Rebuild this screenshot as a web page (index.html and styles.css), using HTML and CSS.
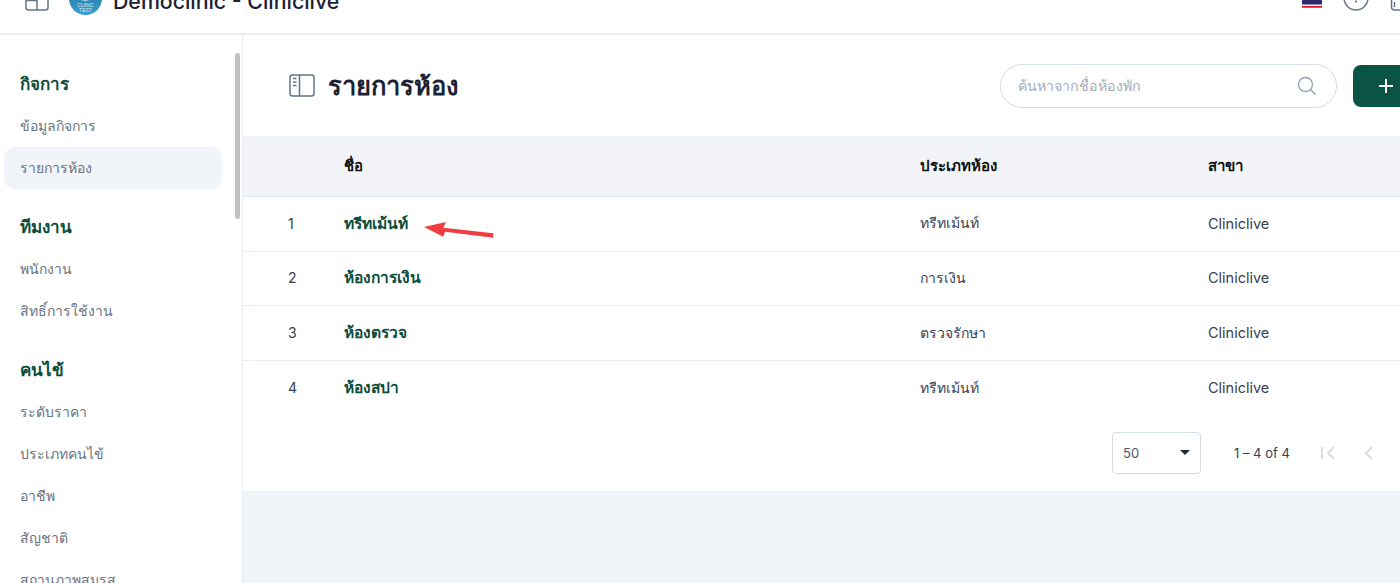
FILE: index.html
```html
<!DOCTYPE html>
<html lang="th">
<head>
<meta charset="utf-8">
<title>รายการห้อง</title>
<link rel="stylesheet" href="styles.css">
</head>
<body>
<header class="topbar">
  <div class="topbar-left">
    <svg class="panel-icon" width="24" height="24" viewBox="0 0 24 24"><rect x="1" y="1" width="22" height="22" rx="2.500"/><path d="M1 13.500h11M12 1v22"/></svg>
    <svg class="logo" width="33" height="33" viewBox="0 0 33 33"><defs><linearGradient id="lg" x1="0" y1="0" x2="0" y2="1"><stop offset="0" stop-color="#1f6f9e"/><stop offset="1" stop-color="#3c9fcd"/></linearGradient></defs><circle cx="16.500" cy="16.500" r="16.500" fill="url(#lg)"/><path d="M10 17q6 3 13 0" fill="none" stroke="#bfe0ee"/><text class="logo-text" x="16.500" y="24.500">CLINIC</text><text class="logo-text" x="16.500" y="30">TEST</text></svg>
    <span class="brand">Democlinic - Cliniclive</span>
  </div>
  <div class="topbar-right">
    <svg class="flag" width="20" height="8" viewBox="0 0 20 8"><rect width="20" height="8" fill="#fff"/><rect width="20" height="4.500" fill="#2d2a6e"/><rect y="5.800" width="20" height="2" fill="#e0202c"/></svg>
    <svg class="info" width="26" height="11" viewBox="0 0 26 11"><circle cx="13" cy="-2" r="12"/><circle cx="13" cy="1.500" r="1.100" class="dot"/></svg>
    <svg class="bin" width="10" height="11" viewBox="0 0 10 11"><path d="M1.500 0v7q0 3 3 3h5.500M4.500 2v5"/></svg>
  </div>
</header>
<div class="layout">
  <aside class="sidebar">
    <section class="nav-group">
      <h3 class="nav-head">กิจการ</h3>
      <a class="nav-item">ข้อมูลกิจการ</a>
      <a class="nav-item active">รายการห้อง</a>
    </section>
    <section class="nav-group">
      <h3 class="nav-head">ทีมงาน</h3>
      <a class="nav-item">พนักงาน</a>
      <a class="nav-item">สิทธิ์การใช้งาน</a>
    </section>
    <section class="nav-group">
      <h3 class="nav-head">คนไข้</h3>
      <a class="nav-item">ระดับราคา</a>
      <a class="nav-item">ประเภทคนไข้</a>
      <a class="nav-item">อาชีพ</a>
      <a class="nav-item">สัญชาติ</a>
      <a class="nav-item">สถานภาพสมรส</a>
    </section>
    <div class="scrollbar"></div>
  </aside>
  <main class="content">
    <div class="card">
      <div class="page-head">
        <div class="page-title">
          <svg class="title-icon" width="26" height="24" viewBox="0 0 26 24"><rect x="1" y="1" width="24" height="21" rx="2.500"/><path d="M10.500 1v21M4 4.500h3.500M4 8h3.500M4 11.500h3.500"/></svg>
          <h1>รายการห้อง</h1>
        </div>
        <div class="page-actions">
          <div class="search">
            <span class="search-text">ค้นหาจากชื่อห้องพัก</span>
            <svg width="20" height="20" viewBox="0 0 20 20"><circle cx="8.500" cy="8.500" r="7"/><path d="M13.500 13.500l5 5"/></svg>
          </div>
          <button class="add-btn"><svg width="16" height="16" viewBox="0 0 16 16"><path d="M8 1v14M1 8h14"/></svg></button>
        </div>
      </div>
      <div class="table">
        <div class="row head"><span></span><span>ชื่อ</span><span>ประเภทห้อง</span><span>สาขา</span></div>
        <div class="row"><span>1</span><span class="name">ทรีทเม้นท์</span><span>ทรีทเม้นท์</span><span class="branch">Cliniclive</span>
          <svg class="arrow" width="74" height="24" viewBox="0 0 74 24"><path d="M1 11L23 6l-2.700 5.700 50 5.600v4.400L22 15.700l-1.700 5z"/></svg>
        </div>
        <div class="row"><span>2</span><span class="name">ห้องการเงิน</span><span>การเงิน</span><span class="branch">Cliniclive</span></div>
        <div class="row"><span>3</span><span class="name">ห้องตรวจ</span><span>ตรวจรักษา</span><span class="branch">Cliniclive</span></div>
        <div class="row last"><span>4</span><span class="name">ห้องสปา</span><span>ทรีทเม้นท์</span><span class="branch">Cliniclive</span></div>
      </div>
      <div class="pager">
        <div class="page-size"><span>50</span><i class="caret"></i></div>
        <span class="range">1 – 4 of 4</span>
        <svg class="pg first" width="16" height="16" viewBox="0 0 16 16"><path d="M2 2v12M14 2L8 8l6 6"/></svg>
        <svg class="pg" width="12" height="16" viewBox="0 0 12 16"><path d="M9 2L3 8l6 6"/></svg>
      </div>
    </div>
  </main>
</div>
</body>
</html>
```

FILE: styles.css
```css
* { box-sizing: border-box; }
html, body { margin: 0; height: 100%; overflow: hidden; }
body {
  font-family: Inter, sans-serif;
  font-size: 14px;
  color: #1f2937;
  background: #fff;
}
.topbar {
  height: 35px;
  border-bottom: 2px solid #e9ecf1;
  display: flex;
  justify-content: space-between;
  align-items: flex-end;
}
.topbar-left { display: flex; align-items: flex-end; flex: none; height: 33px; padding-left: 25px; overflow: hidden; }
.panel-icon { fill: none; stroke: #64748b; stroke-width: 1.5; margin: 0 20px 22px 0; flex: none; }
.logo { margin: 0 11px 18px 0; flex: none; }
.logo-text { font-family: "Liberation Sans", sans-serif; font-size: 5px; fill: #d6ecf5; text-anchor: middle; }
.brand { font-size: 21.3px; font-weight: 500; color: #1a2233; line-height: 24px; margin-bottom: 20px; }
.topbar-right { display: flex; align-items: flex-start; height: 33px; flex: none; }
.flag { margin-right: 21px; }
.info { fill: none; stroke: #64748b; stroke-width: 1.5; margin-right: 21px; }
.info .dot { fill: #64748b; stroke: none; }
.bin { fill: none; stroke: #64748b; stroke-width: 1.5; }
.layout { display: flex; height: 548px; }
.sidebar {
  width: 243px;
  flex: none;
  border-right: 1px solid #e6ebf3;
  padding: 28px 20px 0 4px;
  position: relative;
  overflow: hidden;
}
.nav-group { margin-bottom: 17px; }
.nav-head {
  margin: 0;
  height: 42px;
  padding-left: 16px;
  font-size: 17px;
  font-weight: 700;
  line-height: 42px;
  color: #0b4d3c;
}
.nav-item {
  display: block;
  width: 218px;
  height: 42px;
  padding-left: 16px;
  line-height: 42px;
  font-size: 14px;
  color: #6b7280;
  border-radius: 10px;
}
.nav-item.active { background: #f1f4f9; }
.scrollbar {
  position: absolute;
  left: 235px;
  top: 18px;
  width: 5px;
  height: 166px;
  border-radius: 3px;
  background: #c1c1c1;
}
.content { flex: 1; min-width: 0; background: #f1f4f9; overflow: hidden; }
.card { background: #fff; height: 456px; }
.page-head {
  height: 101px;
  display: flex;
  justify-content: space-between;
  align-items: center;
  padding-left: 46px;
}
.page-title { display: flex; align-items: center; gap: 13px; }
.title-icon { fill: none; stroke: #64748b; stroke-width: 1.5; }
.page-title h1 { margin: 0; font-size: 25.5px; font-weight: 700; color: #1a2233; line-height: 32px; }
.page-actions { display: flex; align-items: center; gap: 16px; margin-right: -60px; }
.search {
  width: 337px;
  height: 44px;
  border: 1px solid #d5dbe6;
  border-radius: 22px;
  display: flex;
  align-items: center;
  justify-content: space-between;
  padding: 0 19px 0 17px;
}
.search-text { font-size: 14.2px; color: #a4acb9; }
.search svg { fill: none; stroke: #94a3b8; stroke-width: 1.4; }
.add-btn {
  width: 107px;
  height: 42px;
  border: 0;
  border-radius: 8px;
  background: #0b5345;
  padding: 0 0 0 25px;
  display: flex;
  align-items: center;
}
.add-btn svg { fill: none; stroke: #fff; stroke-width: 2; }
.table { border-top: 1px solid #eceff4; }
.row {
  display: grid;
  grid-template-columns: 101px 576px 288px 1fr;
  align-items: center;
  height: 54.67px;
  padding-bottom: 1px;
  border-bottom: 1px solid #e9edf3;
  position: relative;
  font-size: 14px;
  color: #374151;
}
.row > span:first-child { padding-left: 45px; }
.row.head {
  height: 60px;
  padding-bottom: 2px;
  background: #f3f4f7;
  color: #111;
  font-size: 15px;
  font-weight: 700;
  border-bottom: 1px solid #e6ebf3;
}
.row.last { border-bottom: 0; }
.row .name { font-size: 15.5px; font-weight: 700; color: #0b4d3c; }
.row .branch { font-size: 14.5px; }
.arrow { position: absolute; left: 180px; top: 19px; fill: #ef3e42; }
.pager {
  display: flex;
  align-items: center;
  padding: 16px 0 0 869px;
}
.page-size {
  width: 89px;
  height: 42px;
  border: 1px solid #d5dbe6;
  border-radius: 4px;
  display: flex;
  align-items: center;
  justify-content: space-between;
  padding: 0 10px;
  font-size: 13px;
  color: #4b5563;
}
.caret { width: 0; height: 0; border: 5px solid transparent; border-top: 5px solid #1f2937; border-bottom: 0; }
.range { margin-left: 33px; margin-right: 30px; font-size: 13px; color: #374151; }
.pg { fill: none; stroke: #d9dce1; stroke-width: 2; flex: none; }
.pg.first { margin-right: 27px; }
```
